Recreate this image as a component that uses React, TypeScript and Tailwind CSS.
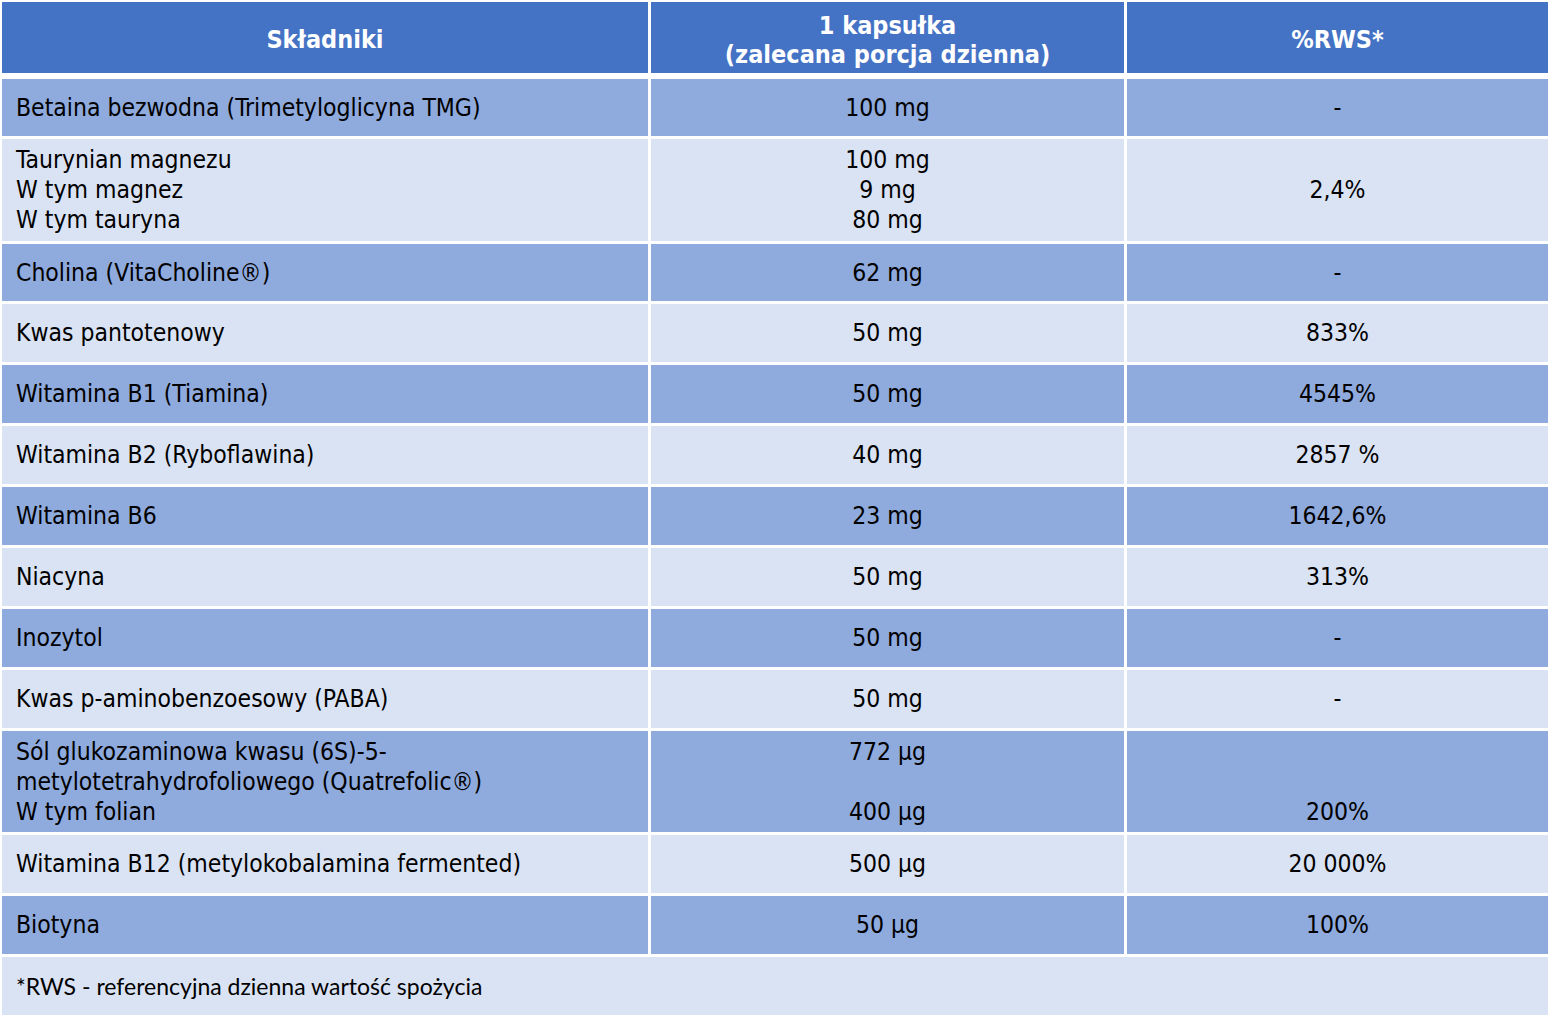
const rows: { name: string[]; dose: string[]; rws: string[]; h: string }[] = [
  { name: ["Betaina bezwodna (Trimetyloglicyna TMG)"], dose: ["100 mg"], rws: ["-"], h: "h-[57px]" },
  {
    name: ["Taurynian magnezu", "W tym magnez", "W tym tauryna"],
    dose: ["100 mg", "9 mg", "80 mg"],
    rws: ["2,4%"],
    h: "h-[102px]",
  },
  { name: ["Cholina (VitaCholine®)"], dose: ["62 mg"], rws: ["-"], h: "h-[57px]" },
  { name: ["Kwas pantotenowy"], dose: ["50 mg"], rws: ["833%"], h: "h-[58px]" },
  { name: ["Witamina B1 (Tiamina)"], dose: ["50 mg"], rws: ["4545%"], h: "h-[58px]" },
  { name: ["Witamina B2 (Ryboflawina)"], dose: ["40 mg"], rws: ["2857 %"], h: "h-[58px]" },
  { name: ["Witamina B6"], dose: ["23 mg"], rws: ["1642,6%"], h: "h-[58px]" },
  { name: ["Niacyna"], dose: ["50 mg"], rws: ["313%"], h: "h-[58px]" },
  { name: ["Inozytol"], dose: ["50 mg"], rws: ["-"], h: "h-[58px]" },
  { name: ["Kwas p-aminobenzoesowy (PABA)"], dose: ["50 mg"], rws: ["-"], h: "h-[58px]" },
  {
    name: ["Sól glukozaminowa kwasu (6S)-5-", "metylotetrahydrofoliowego (Quatrefolic®)", "W tym folian"],
    dose: ["772 µg", "\u00a0", "400 µg"],
    rws: ["\u00a0", "\u00a0", "200%"],
    h: "h-[101px]",
  },
  { name: ["Witamina B12 (metylokobalamina fermented)"], dose: ["500 µg"], rws: ["20 000%"], h: "h-[58px]" },
  { name: ["Biotyna"], dose: ["50 µg"], rws: ["100%"], h: "h-[58px]" },
];

const font = "font-['DejaVu_Sans_Condensed','DejaVu_Sans',sans-serif]";

const Lines = ({ lines }: { lines: string[] }) => (
  <div className="flex flex-col">
    {lines.map((l, i) => (
      <span key={i} className="leading-[30px] whitespace-nowrap">
        {l}
      </span>
    ))}
  </div>
);

export default function App() {
  return (
    <div className="min-h-screen bg-white pt-[2px] pl-[2px]">
      <div className={`w-[1546px] grid grid-cols-[646px_473px_421px] gap-[3px] text-[24.5px] text-black ${font}`}>
        <div className="h-[71px] bg-[#4472C4] flex items-center justify-center pt-[4px] text-white font-bold text-[25px]">
          Składniki
        </div>
        <div className="h-[71px] bg-[#4472C4] flex flex-col items-center justify-center pt-[4px] text-white font-bold text-[25px] leading-[29px]">
          <span>1 kapsułka</span>
          <span>(zalecana porcja dzienna)</span>
        </div>
        <div className="h-[71px] bg-[#4472C4] flex items-center justify-center pt-[4px] text-white font-bold text-[25px]">
          %RWS*
        </div>
        <div className="col-span-3 h-0" />

        {rows.map((r, i) => {
          const bg = i % 2 === 0 ? "bg-[#8FAADC]" : "bg-[#DAE3F3]";
          return (
            <div key={i} className="contents">
              <div className={`${r.h} ${bg} flex items-center pl-[14px]`}>
                <Lines lines={r.name} />
              </div>
              <div className={`${r.h} ${bg} flex items-center justify-center text-center`}>
                <Lines lines={r.dose} />
              </div>
              <div className={`${r.h} ${bg} flex items-center justify-center text-center`}>
                <Lines lines={r.rws} />
              </div>
            </div>
          );
        })}

        <div className="col-span-3 h-[58px] bg-[#DAE3F3] flex items-center pl-[14px] font-['Lato',sans-serif] text-[23px]">
          *RWS - referencyjna dzienna wartość spożycia
        </div>
      </div>
    </div>
  );
}
